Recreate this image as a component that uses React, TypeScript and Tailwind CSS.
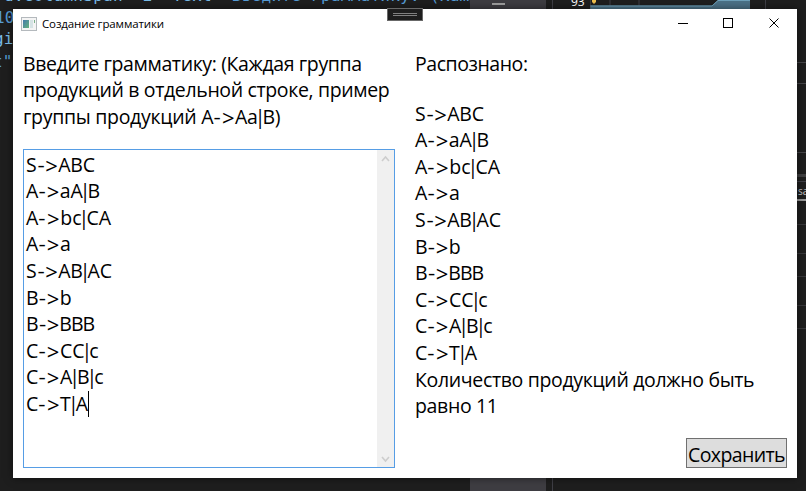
import React from "react";

type Line = { text: string; spacing: string };

const productions: Line[] = [
  { text: "S->ABC", spacing: "tracking-[-0.2px]" },
  { text: "A->aA|B", spacing: "tracking-[-0.2px]" },
  { text: "A->bc|CA", spacing: "tracking-[0.1px]" },
  { text: "A->a", spacing: "tracking-[-0.1px]" },
  { text: "S->AB|AC", spacing: "tracking-[-0.2px]" },
  { text: "B->b", spacing: "tracking-[-0.6px]" },
  { text: "B->BBB", spacing: "tracking-[-1px]" },
  { text: "C->CC|c", spacing: "tracking-[0px]" },
  { text: "C->A|B|c", spacing: "tracking-[-0.1px]" },
  { text: "C->T|A", spacing: "tracking-[0.1px]" },
];

function Symbols({ text }: { text: string }) {
  return (
    <>
      {text.split(/(-|>|\|)/).filter(Boolean).map((part, i) => {
        if (part === "-") return <span key={i} className="flex w-[8px] scale-x-115 justify-center">-</span>;
        if (part === ">") return <span key={i} className="flex w-[13.7px] justify-center text-[22px]">&gt;</span>;
        if (part === "|") return <span key={i} className="flex w-[4.8px] justify-center">|</span>;
        return <span key={i}>{part}</span>;
      })}
    </>
  );
}

function Production({ text, spacing }: Line) {
  return (
    <div className={`flex h-[26.6px] whitespace-pre ${spacing}`}>
      <Symbols text={text} />
    </div>
  );
}

function Backdrop() {
  return (
    <div className="absolute inset-0 bg-[#1e1e1e] font-['DejaVu_Sans_Mono',monospace] text-[16px] text-[#569cd6]">
      <div className="absolute left-[4px] top-[-14px] whitespace-pre leading-[20px] tracking-[0.27px]">
        <span className="text-[#79bce8]">d.ColumnSpan</span>="<span className="text-[#79bce8]">2</span>" <span className="text-[#79bce8]">Text</span>="Введите грамматику: (Кажд
      </div>
      <div className="absolute left-[-5px] top-[8px] leading-[20px]">10</div>
      <div className="absolute left-[-6px] top-[29px] leading-[20px] text-[#79bce8]">gi</div>
      <div className="absolute left-[-7px] top-[52px] leading-[20px]">t"</div>
      <div className="absolute inset-y-0 left-[470px] w-[76px] bg-[#3e3d42]">
        <div className="ml-[22px] mt-[3px] h-[2px] w-[13px] bg-[#a0a0a0]" />
      </div>
      <div className="absolute inset-y-0 left-[546px] w-[7px] border-r border-[#3f3f46] bg-[#1e1e1e]" />
      <div className="absolute left-[571px] top-[-5px] font-['Open_Sans',sans-serif] text-[12px] leading-[14px] text-white">93</div>
      <svg className="absolute left-[590px] top-0" width="216" height="9" viewBox="0 0 216 9">
        <path d="M19.5 0H20.5V6H19.5ZM48.5 0H49.5V6H48.5ZM175 0H176V9H175Z" fill="#3f3f46" />
        <path d="M0 5.5H122L128 0H160V9H0Z" fill="#4c7287" />
        <path d="M0 6H122L128 .5H160" fill="none" stroke="#6da0b9" />
        <path d="M2 0H6V2L4 4L2 2Z" fill="#efc04d" />
        <path d="M0 0V9" stroke="#555" />
      </svg>
      <div className="absolute bottom-0 right-0 top-[62px] flex w-[9px] flex-col">
        <div className="h-[21px] border-t border-[#46464a]" />
        <div className="h-[69px] border-t border-[#46464a]" />
        <div className="h-[22px] border-t border-[#46464a]" />
        <div className="h-[3px] bg-[#3f3f40]" />
        <div className="mt-[4px] h-[18px] overflow-hidden border-t border-[#3f3f46] pl-px pt-px font-['Open_Sans',sans-serif] text-[10px] leading-[16px] text-[#c8c8c8]">sa</div>
        <div className="h-[2px] bg-[#999999]" />
        <div className="mt-[23px] h-[29px] border-t border-[#38383b]" />
        <div className="h-[23px] border-t border-[#38383b]" />
        <div className="h-[29px] border-t border-[#38383b]" />
        <div className="h-[23px] border-t border-[#38383b]" />
        <div className="border-t border-[#38383b]" />
      </div>
    </div>
  );
}

export default function App() {
  return (
    <div className="relative h-[491px] w-[806px] overflow-hidden font-['Open_Sans','Noto_Sans',sans-serif] text-black">
      <Backdrop />
      <main className="absolute left-[13px] top-[9px] flex h-[469px] w-[784px] flex-col bg-white shadow-[0_0_8px_#00000080]">
        <header className="flex h-[29px] shrink-0 items-center pl-[8px]">
          <svg width="16" height="14" viewBox="0 0 16 14" shapeRendering="crispEdges">
            <defs>
              <linearGradient id="pane" x1="0" y1="0" x2="1" y2="1">
                <stop stopColor="#447aac" />
                <stop offset="1" stopColor="#64b27c" />
              </linearGradient>
            </defs>
            <path d="M.5 .5H15.5V13.5H.5Z" fill="#f4f4f4" stroke="#b4b9bd" />
            <path d="M2 3H8V11H2Z" fill="url(#pane)" />
            <path d="M9 3H12V11H9Z" fill="#d6e3e5" />
            <path d="M13 3H14V6H13Z" fill="#7cb08a" />
          </svg>
          <h1 className="ml-[5px] flex-1 whitespace-nowrap text-[11.5px] leading-[16px] tracking-[-0.13px]">Создание грамматики</h1>
          <div className="flex h-full shrink-0">
            {["M18 14.5H28", "M18.5 9.5H27.5V18.5H18.5Z", "M18.5 9.5L27.5 18.5M27.5 9.5L18.5 18.5"].map((d, i) => (
              <svg key={d} className={i === 0 ? "mr-[-1px]" : ""} width="46" height="29" viewBox="0 0 46 29" fill="none" stroke="black" shapeRendering={i < 2 ? "crispEdges" : "auto"}>
                <path d={d} />
              </svg>
            ))}
          </div>
        </header>
        <div className="flex flex-1 pl-[10px] pr-[10px] text-[19.5px] leading-[26.6px]">
          <section className="mr-[20px] w-[372px] shrink-0">
            <div className="h-[111px] whitespace-nowrap pt-[12.6px]">
              <div className="tracking-[-0.38px]">Введите грамматику: (Каждая группа</div>
              <div className="tracking-[-0.36px]">продукций в отдельной строке, пример</div>
              <div className="flex tracking-[-0.3px]">
                <span className="mr-[5px]">группы продукций</span>
                <Symbols text="A->Aa|B)" />
              </div>
            </div>
            <div className="flex h-[319px] justify-between border border-[#569de5]">
              <div className="pl-[2px] pt-[1.6px]">
                {productions.map((line, i) => (
                  <div key={i} className="flex">
                    <Production {...line} />
                    {i === productions.length - 1 && <div className="h-[26px] w-px bg-black" />}
                  </div>
                ))}
              </div>
              <div className="flex w-[17px] flex-col justify-between bg-[#f0f0f0]">
                <svg width="17" height="17" viewBox="0 0 17 17" fill="none" stroke="#cdcdcd" strokeWidth="1.6"><path d="M5 11L8.5 7L12 11" /></svg>
                <svg width="17" height="17" viewBox="0 0 17 17" fill="none" stroke="#cdcdcd" strokeWidth="1.6"><path d="M5 7L8.5 11L12 7" /></svg>
              </div>
            </div>
          </section>
          <section className="flex flex-1 flex-col pt-[13px]">
            <div className="mb-[23px] tracking-[-0.45px]">Распознано:</div>
            {productions.map((line, i) => <Production key={i} {...line} />)}
            <div className="whitespace-nowrap tracking-[-0.34px]">Количество продукций должно быть</div>
            <div className="tracking-[-0.35px]">равно 11</div>
            <button className="mb-[10px] mt-auto h-[30px] w-[101px] self-end whitespace-nowrap border border-[#707070] bg-[#dddddd] pl-px pt-[4px] text-left leading-[24px] tracking-[-0.6px]">Сохранить</button>
          </section>
        </div>
      </main>
      <div className="absolute left-[387px] top-[8px] flex h-[13px] w-[36px] flex-col items-center justify-center gap-px border border-[#686868] bg-[#1e1e1e]">
        <div className="h-px w-[24px] bg-[#808080]" />
        <div className="h-px w-[24px] bg-[#808080]" />
      </div>
    </div>
  );
}
